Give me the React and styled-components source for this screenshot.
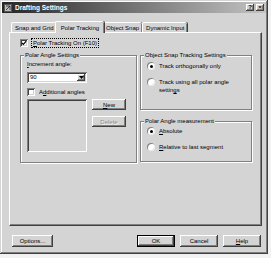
import React from "react";
import styled, { createGlobalStyle } from "styled-components";

const GlobalStyle = createGlobalStyle`
  html, body {
    margin: 0;
    padding: 0;
    background: #f2f2f2;
  }
  body {
    font-family: "Liberation Sans", Arial, sans-serif;
    font-size: 6px;
    color: #000;
  }
  * {
    box-sizing: border-box;
  }
`;

const raised = `
  background: #d4d4d4;
  box-shadow: inset -1px -1px #404040, inset 1px 1px #fff, inset -2px -2px #808080;
`;

const sunken = `
  box-shadow: inset 1px 1px #808080, inset -1px -1px #fff, inset 2px 2px #404040, inset -2px -2px #d4d4d4;
`;

const Window = styled.div`
  width: 268px;
  height: 254px;
  padding: 2px;
  background: #d4d4d4;
  box-shadow: inset -1px -1px #404040, inset 1px 1px #d4d4d4,
    inset -2px -2px #808080, inset 2px 2px #fff;
  display: flex;
  flex-direction: column;
`;

const TitleBar = styled.div`
  height: 11px;
  display: flex;
  align-items: center;
  padding: 0 2px;
  background: linear-gradient(to right, #262626, #c4c4c4);
`;

const Title = styled.span`
  flex: 1;
  margin-left: 3px;
  color: #fff;
  font-weight: bold;
  font-size: 6.5px;
  line-height: 11px;
`;

const CaptionButton = styled.div`
  width: 8px;
  height: 7px;
  margin-left: ${(p) => p.$gap || 0}px;
  ${raised}
  display: flex;
  align-items: center;
  justify-content: center;
  font-weight: bold;
  font-size: 6px;
  line-height: 7px;
`;

const Content = styled.div`
  flex: 1;
  display: flex;
  flex-direction: column;
  padding: 8px 4px 0 7px;
`;

const TabRow = styled.div`
  height: 12px;
  margin-bottom: -1px;
  padding-left: 2px;
  display: flex;
  align-items: flex-end;
  position: relative;
  z-index: 1;
`;

const Tab = styled.div`
  position: relative;
  z-index: ${(p) => (p.$active ? 2 : 1)};
  height: ${(p) => (p.$active ? 12 : 10)}px;
  margin: 0 ${(p) => (p.$active ? -2 : 0)}px ${(p) => (p.$active ? 0 : 1)}px;
  padding: 0 ${(p) => (p.$active ? 5 : 3)}px;
  background: #d4d4d4;
  border-top: 1px solid #fff;
  border-left: 1px solid #fff;
  border-radius: 2px 2px 0 0;
  box-shadow: 1px 0 #404040, inset -1px 0 #808080;
  display: flex;
  align-items: center;
  white-space: nowrap;
`;

const Panel = styled.div`
  height: 194px;
  border-top: 1px solid #fff;
  border-left: 1px solid #fff;
  border-right: 1px solid #404040;
  border-bottom: 1px solid #404040;
  box-shadow: inset -1px -1px #808080;
  padding: 6px 9px 0 10px;
  display: flex;
  flex-direction: column;
`;

const Row = styled.div`
  display: flex;
  align-items: ${(p) => (p.$top ? "flex-start" : "center")};
  gap: 4px;
  margin-top: ${(p) => p.$mt || 0}px;
  line-height: 8px;
`;

const CheckBox = styled.span`
  width: 8px;
  height: 8px;
  flex: none;
  background: #fff;
  ${sunken}
  display: flex;
  align-items: center;
  justify-content: center;
`;

const RadioDot = styled.span`
  width: 8px;
  height: 8px;
  flex: none;
  border-radius: 50%;
  background: #fff;
  box-shadow: inset 1px 1px #808080, inset -1px -1px #e8e8e8;
  display: flex;
  align-items: center;
  justify-content: center;
  &::after {
    content: "";
    width: 3px;
    height: 3px;
    border-radius: 50%;
    background: ${(p) => (p.$on ? "#000" : "transparent")};
  }
`;

const Focus = styled.span`
  outline: 1px dotted #000;
  outline-offset: 0;
  padding: 0 1px;
`;

const Key = styled.u`
  text-decoration: underline;
`;

const Columns = styled.div`
  display: flex;
  gap: 3px;
  margin-top: 8px;
`;

const RightColumn = styled.div`
  width: 112px;
  display: flex;
  flex-direction: column;
  gap: 11px;
`;

const Group = styled.div`
  position: relative;
  width: ${(p) => p.$w || "auto"};
  height: ${(p) => p.$h}px;
  padding: ${(p) => p.$pt}px 6px 0 6px;
  border: 1px solid #808080;
  box-shadow: 1px 1px 0 #fff, inset 1px 1px 0 #fff;
`;

const GroupLabel = styled.span`
  position: absolute;
  top: -5px;
  left: 3px;
  padding: 0 1px;
  background: #d4d4d4;
  line-height: 8px;
  white-space: nowrap;
`;

const FieldLabel = styled.div`
  line-height: 8px;
`;

const Combo = styled.div`
  width: 60px;
  height: 11px;
  margin-top: 4px;
  background: #fff;
  ${sunken}
  display: flex;
  align-items: center;
  justify-content: space-between;
  padding: 2px 2px 2px 3px;
  line-height: 7px;
`;

const ComboArrow = styled.span`
  width: 8px;
  height: 7px;
  ${raised}
  display: flex;
  align-items: center;
  justify-content: center;
`;

const ListRow = styled.div`
  display: flex;
  gap: 5px;
  margin-top: 3px;
`;

const ListBox = styled.div`
  width: 60px;
  height: 53px;
  background: #d4d4d4;
  ${sunken}
`;

const SideButtons = styled.div`
  display: flex;
  flex-direction: column;
  gap: 6px;
`;

const Button = styled.div`
  width: ${(p) => p.$w}px;
  height: ${(p) => p.$h || 12}px;
  ${raised}
  ${(p) =>
    p.$default &&
    `box-shadow: inset 0 0 0 1px #000, inset -2px -2px #404040, inset 2px 2px #fff, inset -3px -3px #808080;`}
  color: ${(p) => (p.$disabled ? "#8a8a8a" : "#000")};
  text-shadow: ${(p) => (p.$disabled ? "1px 1px 0 #fff" : "none")};
  display: flex;
  align-items: center;
  justify-content: center;
  line-height: 8px;
`;

const Footer = styled.div`
  display: flex;
  align-items: center;
  gap: 5px;
  margin-top: 9px;
  padding: 0 1px 0 3px;
`;

const Spacer = styled.div`
  flex: 1;
`;

function Check() {
  return (
    <CheckBox>
      <svg width="6" height="6" viewBox="0 0 6 6">
        <path d="M0.8 2.8 L2.4 4.4 L5.2 1.2" fill="none" stroke="#000" strokeWidth="1.2" />
      </svg>
    </CheckBox>
  );
}

export default function App() {
  return (
    <>
      <GlobalStyle />
      <Window>
        <TitleBar>
          <svg width="8" height="8" viewBox="0 0 8 8">
            <rect x="0.5" y="0.5" width="7" height="7" fill="#bdbdbd" stroke="#555" />
            <path d="M2 6 L6 2 M2 2 H6 V6" stroke="#222" fill="none" strokeWidth="0.8" />
          </svg>
          <Title>Drafting Settings</Title>
          <CaptionButton>?</CaptionButton>
          <CaptionButton $gap={2}>×</CaptionButton>
        </TitleBar>
        <Content>
          <TabRow>
            <Tab>Snap and Grid</Tab>
            <Tab $active>Polar Tracking</Tab>
            <Tab>Object Snap</Tab>
            <Tab>Dynamic Input</Tab>
          </TabRow>
          <Panel>
            <Row>
              <Check />
              <Focus>
                <Key>P</Key>olar Tracking On (F10)
              </Focus>
            </Row>
            <Columns>
              <Group $w="117px" $h={108} $pt={4}>
                <GroupLabel>Polar Angle Settings</GroupLabel>
                <FieldLabel>
                  <Key>I</Key>ncrement angle:
                </FieldLabel>
                <Combo>
                  <span>90</span>
                  <ComboArrow>
                    <svg width="5" height="3" viewBox="0 0 5 3">
                      <path d="M0 0 H5 L2.5 3 Z" fill="#000" />
                    </svg>
                  </ComboArrow>
                </Combo>
                <Row $mt={5}>
                  <CheckBox />
                  <span>
                    A<Key>d</Key>ditional angles
                  </span>
                </Row>
                <ListRow>
                  <ListBox />
                  <SideButtons>
                    <Button $w={34} $h={11}>
                      <span>
                        <Key>N</Key>ew
                      </span>
                    </Button>
                    <Button $w={34} $h={11} $disabled>
                      Delete
                    </Button>
                  </SideButtons>
                </ListRow>
              </Group>
              <RightColumn>
                <Group $h={55} $pt={6}>
                  <GroupLabel>Object Snap Tracking Settings</GroupLabel>
                  <Row>
                    <RadioDot $on />
                    <span>Track orthogonally only</span>
                  </Row>
                  <Row $top $mt={8}>
                    <RadioDot />
                    <span>
                      Track using all polar angle
                      <br />
                      settin<Key>g</Key>s
                    </span>
                  </Row>
                </Group>
                <Group $h={41} $pt={5}>
                  <GroupLabel>Polar Angle measurement</GroupLabel>
                  <Row>
                    <RadioDot $on />
                    <span>
                      <Key>A</Key>bsolute
                    </span>
                  </Row>
                  <Row $mt={8}>
                    <RadioDot />
                    <span>
                      <Key>R</Key>elative to last segment
                    </span>
                  </Row>
                </Group>
              </RightColumn>
            </Columns>
          </Panel>
          <Footer>
            <Button $w={41}>Options...</Button>
            <Spacer />
            <Button $w={38} $default>
              OK
            </Button>
            <Button $w={38}>Cancel</Button>
            <Button $w={38}>
              <span>
                <Key>H</Key>elp
              </span>
            </Button>
          </Footer>
        </Content>
      </Window>
    </>
  );
}
